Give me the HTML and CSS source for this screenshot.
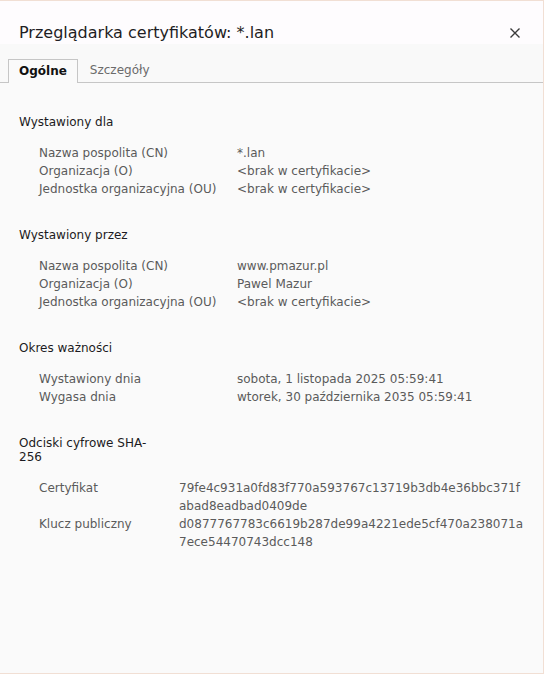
FILE: index.html
```html
<!DOCTYPE html>
<html lang="pl">
<head>
<meta charset="utf-8">
<title>Przeglądarka certyfikatów</title>
<link rel="stylesheet" href="styles.css">
</head>
<body>
<div class="dialog">
  <header class="header">
    <h1 class="title">Przeglądarka certyfikatów: *.lan</h1>
    <button class="close" aria-label="Zamknij">
      <svg width="10" height="10" viewBox="0 0 10 10"><path d="M0.5 0.5 L9.5 9.5 M9.5 0.5 L0.5 9.5" stroke="#3a3a3a" stroke-width="1.4" fill="none"/></svg>
    </button>
  </header>
  <nav class="tabs">
    <span class="tab active">Ogólne</span>
    <span class="tab">Szczegóły</span>
  </nav>
  <main class="content">
    <section class="section">
      <h2 class="heading">Wystawiony dla</h2>
      <div class="rows">
        <span class="label">Nazwa pospolita (CN)</span><span class="value">*.lan</span>
        <span class="label">Organizacja (O)</span><span class="value">&lt;brak w certyfikacie&gt;</span>
        <span class="label">Jednostka organizacyjna (OU)</span><span class="value">&lt;brak w certyfikacie&gt;</span>
      </div>
    </section>
    <section class="section">
      <h2 class="heading">Wystawiony przez</h2>
      <div class="rows">
        <span class="label">Nazwa pospolita (CN)</span><span class="value">www.pmazur.pl</span>
        <span class="label">Organizacja (O)</span><span class="value">Pawel Mazur</span>
        <span class="label">Jednostka organizacyjna (OU)</span><span class="value">&lt;brak w certyfikacie&gt;</span>
      </div>
    </section>
    <section class="section">
      <h2 class="heading">Okres ważności</h2>
      <div class="rows">
        <span class="label">Wystawiony dnia</span><span class="value">sobota, 1 listopada 2025 05:59:41</span>
        <span class="label">Wygasa dnia</span><span class="value">wtorek, 30 października 2035 05:59:41</span>
      </div>
    </section>
    <section class="section">
      <h2 class="heading narrow">Odciski cyfrowe SHA-256</h2>
      <div class="rows hashes">
        <span class="label">Certyfikat</span><span class="value hash">79fe4c931a0fd83f770a593767c13719b3db4e36bbc371fabad8eadbad0409de</span>
        <span class="label">Klucz publiczny</span><span class="value hash">d0877767783c6619b287de99a4221ede5cf470a238071a7ece54470743dcc148</span>
      </div>
    </section>
  </main>
</div>
</body>
</html>
```
FILE: styles.css
```css
html, body {
  margin: 0;
  padding: 0;
  height: 100%;
}
body {
  font-family: "DejaVu Sans", sans-serif;
  background: #fafafa;
}
.dialog {
  box-sizing: border-box;
  height: 674px;
  border-top: 1px solid #f1dfd4;
  border-right: 1px solid #f1dfd4;
  border-bottom: 1px solid #f1dfd4;
  background: #fafafa;
  display: flex;
  flex-direction: column;
}
.header {
  height: 43px;
  box-sizing: border-box;
  background: #fefcfe;
  display: flex;
  align-items: center;
  justify-content: space-between;
  padding: 20px 23px 0 19px;
}
.title {
  margin: 0;
  font-weight: normal;
  font-size: 16px;
  line-height: 19px;
  color: #1f1e24;
}
.close {
  border: 0;
  background: none;
  padding: 0;
  width: 10px;
  height: 10px;
  display: flex;
}
.tabs {
  display: flex;
  align-items: flex-end;
  height: 39px;
  box-sizing: border-box;
  padding: 0 0 0 8px;
  border-bottom: 1px solid #c6c6c6;
  background: #f9f9f9;
}
.tab {
  font-size: 12px;
  color: #6b6b6b;
  padding: 0 11px 0 12px;
  height: 23px;
  line-height: 23px;
  box-sizing: border-box;
}
.tab.active {
  font-weight: bold;
  color: #111;
  padding: 0 10px;
  border: 1px solid #c6c6c6;
  border-bottom: 0;
  background: #fafafa;
  margin-bottom: -1px;
  height: 24px;
  line-height: 22px;
}
.content {
  padding: 32px 19px 0 19px;
  display: flex;
  flex-direction: column;
  gap: 30px;
}
.heading {
  margin: 0;
  font-weight: normal;
  font-size: 12px;
  line-height: 14px;
  color: #1c1b22;
}
.heading.narrow {
  max-width: 140px;
}
.rows {
  display: grid;
  grid-template-columns: 198px 1fr;
  margin: 15px 0 0 20px;
  font-size: 12px;
  line-height: 18px;
  color: #5b5b5b;
}
.rows.hashes {
  grid-template-columns: 140px 1fr;
}
.hash {
  word-break: break-all;
  max-width: 346px;
}
```
